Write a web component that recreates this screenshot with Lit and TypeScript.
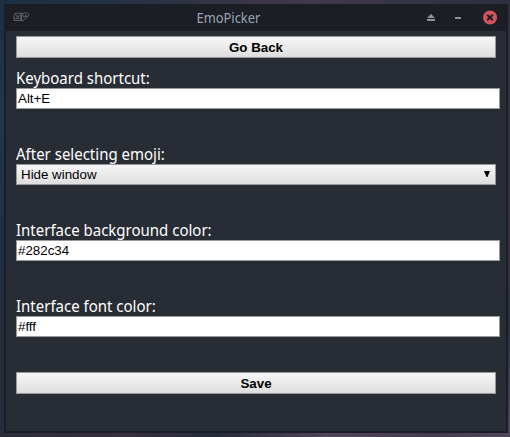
import { LitElement, html, css } from "lit";
import { customElement } from "lit/decorators.js";

@customElement("app-root")
export class AppRoot extends LitElement {
  static styles = css`
    :host {
      display: block;
      box-sizing: border-box;
      width: 510px;
      height: 437px;
      padding: 4px 2px 4px 4px;
      overflow: hidden;
      background:
        linear-gradient(90deg, #2b2c38, #38303e 25%, #252b3a 42%, #51455a 65%, #443b4d 85%, #51475c) 0 433px / 510px 4px no-repeat,
        linear-gradient(90deg, #1c2f42, #243244 24%, #373544 45%, #41384a 62%, #353543 80%, #2e303d) 0 0 / 510px 4px no-repeat,
        linear-gradient(180deg, #1c2f42, #20374a 25%, #1d3042 60%, #282c39 80%, #242e3d) 0 0 / 4px 437px no-repeat,
        linear-gradient(180deg, #2e303d, #333342 40%, #3b2f3f 53%, #28313f 75%, #51475c) 100% 0 / 2px 437px no-repeat;
    }
    .window {
      box-sizing: border-box;
      height: 429px;
      background: #282c34;
      border: 2px solid #1b1e25;
      border-top: 0;
    }
    .bar {
      display: flex;
      align-items: center;
      box-sizing: border-box;
      height: 27px;
      padding: 0 9px 0 7px;
      background: #1b1e25;
    }
    .logo { display: block; width: 17px; height: 10px; margin-top: -1px; }
    .title {
      flex: 1;
      padding-left: 2px;
      text-align: center;
      font: 14px/27px "Noto Sans", sans-serif;
      color: #9da3b3;
      transform: scaleX(0.92);
    }
    .controls { display: block; width: 72px; height: 15px; margin-top: -1px; }
    .form { padding: 5px 10px 0; }
    .button, .field, .select {
      box-sizing: border-box;
      border: 1px solid #999;
      color: #000;
      font: 13.33px/19px "Liberation Sans", Arial, sans-serif;
    }
    .button, .select { width: 480px; background: linear-gradient(#f6f6f6, #dedede); }
    .button { height: 22px; line-height: 21px; font-weight: bold; text-align: center; }
    .group { height: 66px; margin-top: 10px; }
    .label {
      height: 20px;
      white-space: nowrap;
      font: 16px/20px "Noto Sans", sans-serif;
      color: #fff;
      transform: scaleX(0.937);
      transform-origin: 0 0;
    }
    .field { width: 484px; height: 21px; padding-left: 1px; background: #fff; }
    .select {
      display: flex;
      justify-content: space-between;
      height: 21px;
      padding: 0 4px;
    }
    .arrow { width: 8px; height: 7px; margin-top: 6px; }
    .save { margin-top: 10px; }
  `;

  private field(label: string, value: string) {
    return html`<div class="group">
      <div class="label">${label}</div>
      <div class="field">${value}</div>
    </div>`;
  }

  render() {
    return html`
      <div class="window">
        <div class="bar">
          <svg class="logo" viewBox="0 0 17 10" fill="none" stroke="#75787e" stroke-width=".75">
            <path d="M2.2 1.2H8.3L7.6 4.5 8.2 8.5H1L1.7 6 .6 6.5ZM8.8 1.5L13.5 .8 15.6 2.2 15.2 4.6 12.5 6.3 9.8 9 8.4 8.3Z" />
            <path d="M3 2.8L4.6 4.6M6.4 2.8L5.4 4.8 3 5.2M2.6 6.5H6.5M10.3 3V5.3M11.4 4.6L13.2 3.2 13 5Z" />
          </svg>
          <div class="title">EmoPicker</div>
          <svg class="controls" viewBox="0 0 72 15">
            <path d="M2 8L6 4 10 8ZM2 9H10V11H2Z" fill="#8e929b" />
            <path d="M30 7H36V9H30Z" fill="#8e929b" />
            <circle cx="65" cy="7.5" r="7" fill="#d2555c" />
            <path d="M62.2 4.7L67.8 10.3M67.8 4.7L62.2 10.3" stroke="#1b1e25" stroke-width="2" />
          </svg>
        </div>
        <div class="form">
          <div class="button">Go Back</div>
          ${this.field("Keyboard shortcut:", "Alt+E")}
          <div class="group">
            <div class="label">After selecting emoji:</div>
            <div class="select">
              <span>Hide window</span>
              <svg class="arrow" viewBox="0 0 8 7"><path d="M1 0H7L4.5 6H3.5Z" /></svg>
            </div>
          </div>
          ${this.field("Interface background color:", "#282c34")}
          ${this.field("Interface font color:", "#fff")}
          <div class="button save">Save</div>
        </div>
      </div>
    `;
  }
}
